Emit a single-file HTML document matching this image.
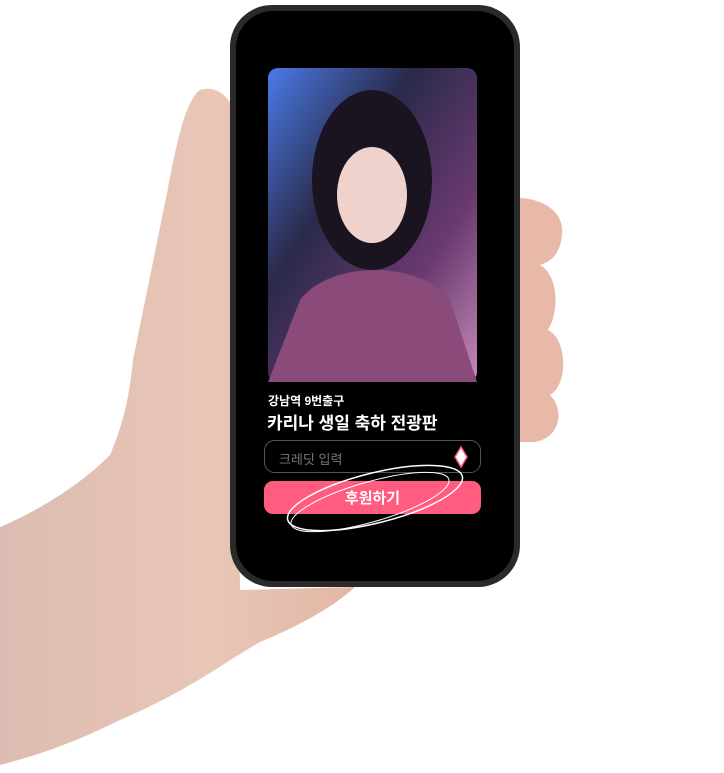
<!DOCTYPE html>
<html><head><meta charset="utf-8"><style>
body{margin:0;width:724px;height:773px;background:#fff;position:relative;overflow:hidden;font-family:"Liberation Sans","Noto Sans CJK KR",sans-serif}
svg{position:absolute;left:0;top:0}
.t{position:absolute;color:#fff;font-weight:bold}
</style></head><body>
<svg width="724" height="773">
<defs>
<linearGradient id="sk" x1="0" y1="0" x2="1" y2="0"><stop offset="0" stop-color="#dcbcb2"/><stop offset="0.6" stop-color="#e9c6b6"/><stop offset="1" stop-color="#e2b6a4"/></linearGradient>
<linearGradient id="img" x1="0" y1="0" x2="1" y2="1"><stop offset="0" stop-color="#4a7be8"/><stop offset="0.35" stop-color="#2a2a4a"/><stop offset="0.7" stop-color="#6a3a70"/><stop offset="1" stop-color="#c78ab8"/></linearGradient>
</defs>
<!-- arm & palm -->
<path d="M0 527 C40 510 80 485 110 455 C125 420 130 390 133 360 L167 193 C175 150 185 100 200 90 C215 85 228 95 234 110 L240 590 L355 587 C330 610 290 630 260 642 C220 665 190 690 120 720 C80 740 40 755 0 765 Z" fill="url(#sk)"/>
<!-- right fingers -->
<path d="M505 198 C540 195 565 210 562 235 C560 255 550 262 540 265 C558 275 560 310 548 330 C568 340 568 385 550 395 C565 410 560 438 535 442 L505 442 Z" fill="#e8b9a8"/>
<!-- phone -->
<rect x="230" y="5" width="290" height="582" rx="42" fill="#2a2a2a"/>
<rect x="236" y="11" width="278" height="570" rx="37" fill="#000"/>
<rect x="268" y="68" width="209" height="314" rx="10" fill="url(#img)"/>
<ellipse cx="372" cy="180" rx="60" ry="90" fill="#1a1420"/>
<ellipse cx="372" cy="195" rx="35" ry="48" fill="#f0d2cc"/>
<path d="M300 300 C330 260 420 260 450 300 L477 382 L268 382 Z" fill="#8a4a7a"/>
<!-- input -->
<rect x="264.5" y="440.5" width="216" height="32" rx="10" fill="none" stroke="#555"/>
<path d="M461 447 L467 457 L461 467 L455 457 Z" fill="#fff" stroke="#ff5a7e" stroke-width="1.5"/>
<rect x="264" y="481" width="217" height="33" rx="9" fill="#ff5c80"/>
<ellipse cx="375" cy="498" rx="90" ry="25" transform="rotate(-14 375 498)" fill="none" stroke="#fff" stroke-width="1.5"/>
<ellipse cx="370" cy="502" rx="82" ry="20" transform="rotate(-16 370 502)" fill="none" stroke="#fff" stroke-width="1"/>
</svg>
<div class="t" style="left:268px;top:392px;font-size:12px">강남역 9번출구</div>
<div class="t" style="left:267px;top:409px;font-size:17px">카리나 생일 축하 전광판</div>
<div class="t" style="left:279px;top:449px;font-size:13px;font-weight:normal;color:#777">크레딧 입력</div>
<div class="t" style="left:264px;top:487px;width:217px;text-align:center;font-size:15px">후원하기</div>
</body></html>
